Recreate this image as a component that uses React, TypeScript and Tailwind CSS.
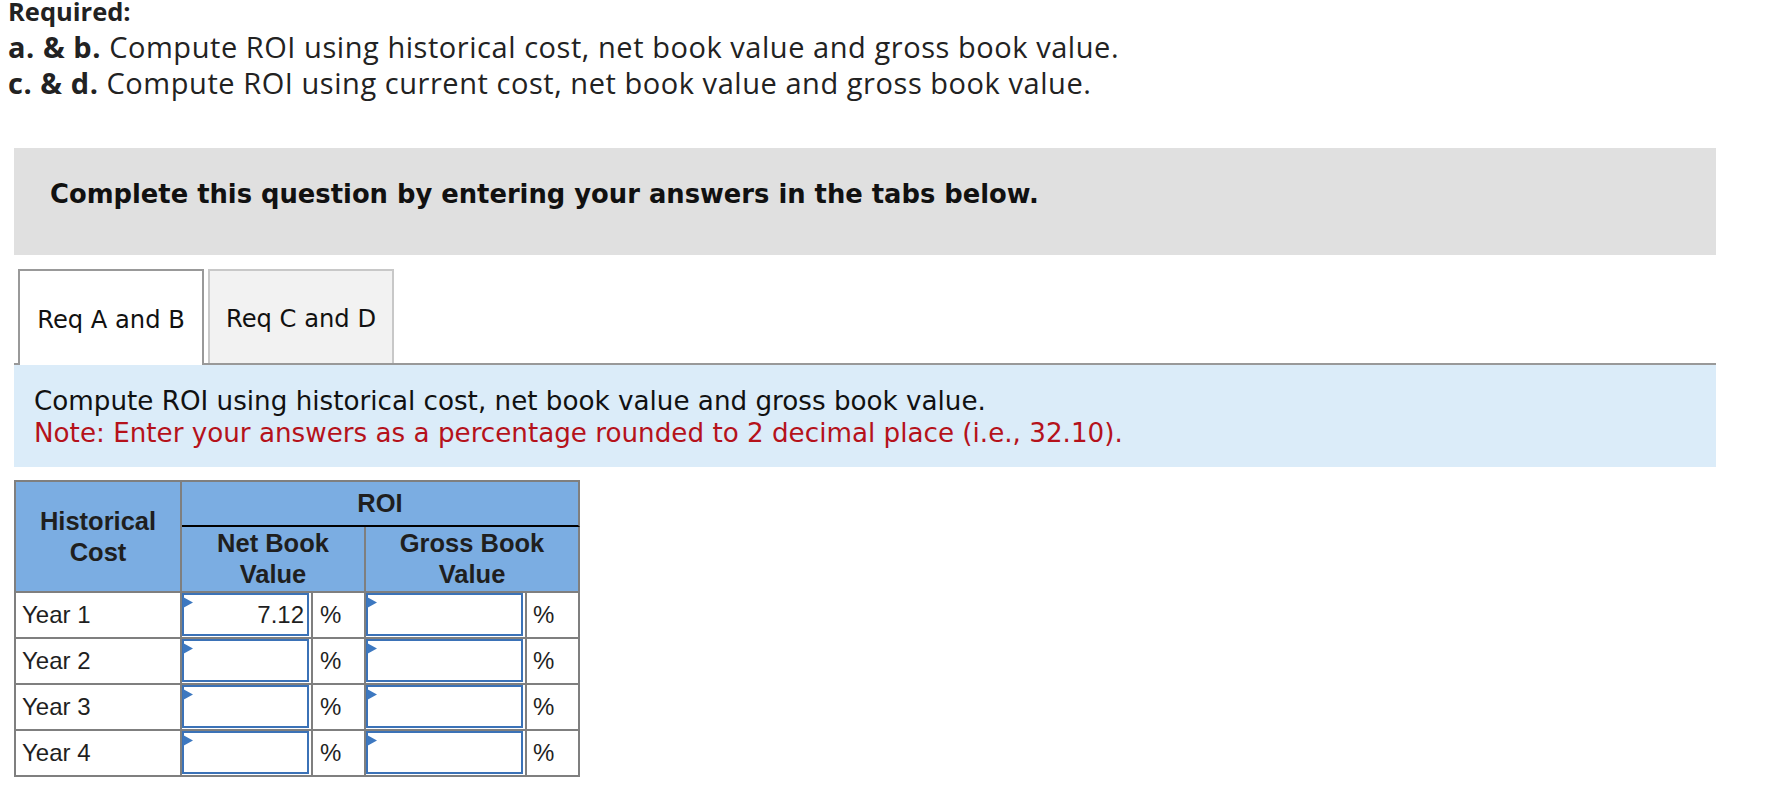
import React from "react";

function Marker() {
  return (
    <svg className="absolute left-[-1px] top-[2px]" width="10" height="11" viewBox="0 0 10 11">
      <polygon points="0,0 10,5.5 0,11" fill="#3d78c0" />
    </svg>
  );
}

function InputBox({ value, w }: { value?: string; w: string }) {
  return (
    <div className={`relative h-[43px] ${w} border-2 border-[#3b72b7] bg-white text-right pr-[3px] leading-[39px]`}>
      <Marker />
      {value}
    </div>
  );
}

export default function App() {
  const rows = [
    { y: "Year 1", v: "7.12" },
    { y: "Year 2", v: "" },
    { y: "Year 3", v: "" },
    { y: "Year 4", v: "" },
  ];
  return (
    <div className="w-[1792px] h-[790px] bg-white overflow-hidden">
      <div className="pl-[8px] -mt-[7px] font-['Open_Sans',sans-serif] leading-[36px] text-[#222]">
        <p className="font-bold text-[25.5px]">Required:</p>
        <p className="text-[29px] tracking-[0.55px]">
          <span className="font-bold">a. &amp; b.</span> Compute ROI using historical cost, net book value and gross book value.
        </p>
        <p className="text-[29px] tracking-[0.55px]">
          <span className="font-bold">c. &amp; d.</span> Compute ROI using current cost, net book value and gross book value.
        </p>
      </div>

      <div className="ml-[14px] mt-[47px] w-[1702px] h-[107px] bg-[#e0e0e0] pl-[36px] pt-[31px]">
        <p className="font-['DejaVu_Sans',sans-serif] font-bold text-[25.8px] leading-[30px] text-[#111]">
          Complete this question by entering your answers in the tabs below.
        </p>
      </div>

      <div className="ml-[14px] mt-[14px] w-[1702px] flex gap-[4px] pl-[4px] border-b-2 border-[#999] font-['DejaVu_Sans',sans-serif] text-[24.2px] text-[#111]">
        <div className="w-[186px] h-[96px] -mb-[2px] pt-[4px] border-2 border-b-0 border-[#999] bg-white flex items-center justify-center">
          Req A and B
        </div>
        <div className="w-[186px] h-[94px] pt-[4px] border-2 border-b-0 border-[#c8c8c8] bg-[#f2f2f2] flex items-center justify-center">
          Req C and D
        </div>
      </div>

      <div className="ml-[14px] w-[1702px] h-[102px] bg-[#dbecf9] pl-[20px] pt-[20px] font-['DejaVu_Sans',sans-serif] text-[26.2px] leading-[32px]">
        <p className="text-[#111]">Compute ROI using historical cost, net book value and gross book value.</p>
        <p className="text-[#b5121b]">Note: Enter your answers as a percentage rounded to 2 decimal place (i.e., 32.10).</p>
      </div>

      <table className="ml-[14px] mt-[13px] border-separate border-spacing-0 border-l-2 border-t-2 border-[#7f7f7f] font-['Liberation_Sans',Arial,sans-serif] text-[#1f1f1f] table-fixed w-[566px]">
        <colgroup>
          <col className="w-[166px]" />
          <col className="w-[131px]" />
          <col className="w-[53px]" />
          <col className="w-[161px]" />
          <col className="w-[53px]" />
        </colgroup>
        <thead>
          <tr className="h-[45px]">
            <th rowSpan={2} className="bg-[#7bade2] border-r-2 border-b-2 border-[#7f7f7f] text-[25.5px] leading-[31px] font-bold text-center align-middle">
              Historical<br />Cost
            </th>
            <th colSpan={4} className="bg-[#7bade2] border-r-2 border-r-[#7f7f7f] border-b-2 border-b-black text-[25.5px] leading-[31px] font-bold text-center align-middle">
              ROI
            </th>
          </tr>
          <tr className="h-[66px]">
            <th colSpan={2} className="bg-[#7bade2] border-r-2 border-b-2 border-[#7f7f7f] text-[25.5px] leading-[31px] font-bold text-center align-middle">
              Net Book<br />Value
            </th>
            <th colSpan={2} className="bg-[#7bade2] border-r-2 border-b-2 border-[#7f7f7f] text-[25.5px] leading-[31px] font-bold text-center align-middle">
              Gross Book<br />Value
            </th>
          </tr>
        </thead>
        <tbody className="text-[24px]">
          {rows.map((r) => (
            <tr key={r.y} className="h-[46px]">
              <td className="border-r-2 border-b-2 border-[#7f7f7f] pl-[6px] align-middle">{r.y}</td>
              <td className="border-r-2 border-b-2 border-[#7f7f7f] p-0 pr-[2px] pb-[1px] align-top">
                <InputBox value={r.v} w="w-[127px]" />
              </td>
              <td className="border-r-2 border-b-2 border-[#7f7f7f] pl-[7px] align-middle">%</td>
              <td className="border-r-2 border-b-2 border-[#7f7f7f] p-0 pr-[2px] pb-[1px] align-top">
                <InputBox w="w-[157px]" />
              </td>
              <td className="border-r-2 border-b-2 border-[#7f7f7f] pl-[6px] align-middle">%</td>
            </tr>
          ))}
        </tbody>
      </table>
    </div>
  );
}
